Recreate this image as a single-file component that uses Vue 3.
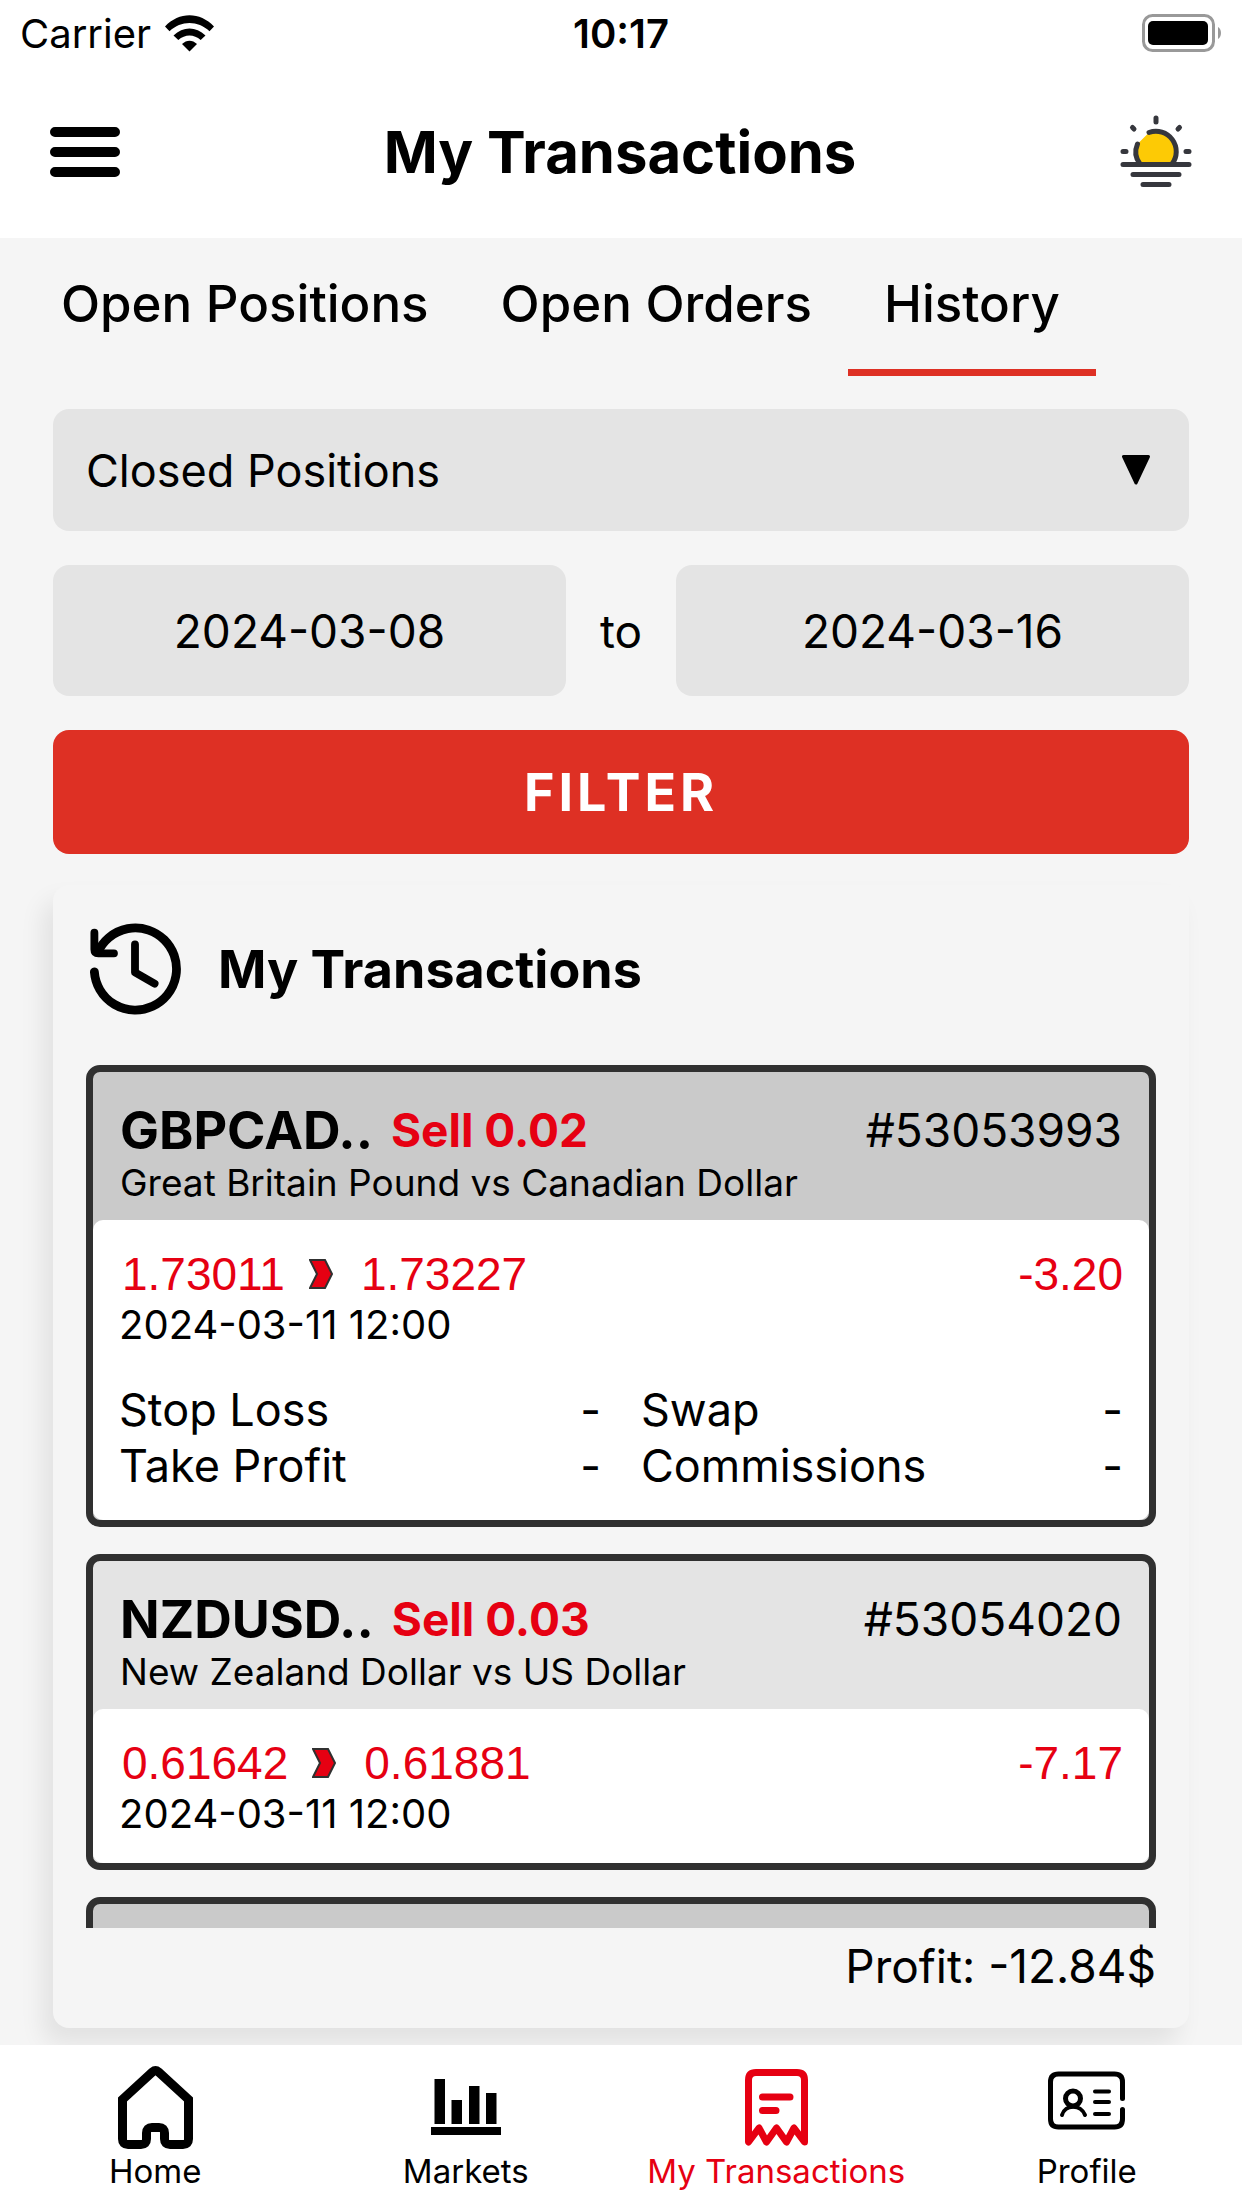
<template>
  <div class="screen">
    <div class="statusBar">
      <div class="carrier">
        <span>Carrier</span>
        <svg class="wifi" viewBox="0 0 49 37" aria-hidden="true">
          <path d="M0 11.5C14-3.5 35-3.5 49 11.5l-4.5 4.8c-11.500-11-28.500-11-40 0z" />
          <path d="M8.500 20.500c9.500-9.500 22.500-9.500 32 0l-4.800 4.500c-6.700-6-15.700-6-22.400 0z" />
          <path d="M17 29c4.500-4.500 10.500-4.500 15 0l-7.500 7.500z" />
        </svg>
      </div>
      <span class="clock">10:17</span>
      <svg class="battery" viewBox="0 0 80 38" aria-hidden="true">
        <rect x="1.500" y="1.500" width="70" height="35" rx="9" fill="none" stroke="#999" stroke-width="3" />
        <rect x="6" y="7" width="60" height="24" rx="5" />
        <path d="M76 13c4 2 4 10 0 12z" fill="#999" />
      </svg>
    </div>

    <header class="header">
      <button class="iconButton" aria-label="Menu">
        <svg class="menuIcon" viewBox="0 0 70 50">
          <path d="M5 5h60M5 25h60M5 45h60" />
        </svg>
      </button>
      <h1>My Transactions</h1>
      <button class="iconButton" aria-label="Theme">
        <svg class="sunIcon" viewBox="0 0 72 74">
          <path d="M17.500 29L29 17.500A20 20 0 0 1 52 49H20A20 20 0 0 1 17.500 29z" fill="#fdca05" />
          <g fill="none" stroke="#36373d" stroke-width="5" stroke-linecap="round">
            <path d="M29 17.500A20.300 20.300 0 0 1 52 49M17.500 29A20 20 0 0 0 20 49" />
            <path d="M36 3v4M3 36.500h3M66 36.500h3M12.500 12.500l1.500 1.500M59.500 12.500L58 14" />
            <path d="M3 49.500h66M13 59.500h46M23 69.500h26" />
          </g>
        </svg>
      </button>
    </header>

    <main class="content">
      <nav class="tabs">
        <button
          v-for="tab in tabs"
          :key="tab"
          :class="{ active: tab === activeTab }"
          @click="activeTab = tab"
        >
          {{ tab }}
        </button>
      </nav>

      <form class="filters" @submit.prevent>
        <div class="selectBox">
          <select v-model="type" aria-label="Position type">
            <option>Closed Positions</option>
          </select>
          <svg class="caret" viewBox="0 0 28 30" aria-hidden="true">
            <path d="M1.500 1.500h25L14 28z" />
          </svg>
        </div>
        <div class="dates">
          <input v-model="from" type="text" aria-label="From date" />
          <span>to</span>
          <input v-model="until" type="text" aria-label="To date" />
        </div>
        <button class="filterButton" type="submit">FILTER</button>
      </form>

      <section class="panel">
        <div class="panelTitle">
          <svg class="historyIcon" viewBox="0 0 94 94" aria-hidden="true">
            <path d="M5.500 50A42 42 0 1 0 9 30" stroke-width="9" />
            <path d="M5.500 10v17q0 4 4 4h16" stroke-width="8" />
            <path d="M47 22v28.500l20 11.500" stroke-width="8" />
          </svg>
          <h2>My Transactions</h2>
        </div>

        <div class="list">
          <article
            v-for="(trade, index) in trades"
            :key="trade.id"
            class="trade"
            :class="{ dark: index % 2 === 0 }"
          >
            <div class="tradeHead">
              <div class="tradeTop">
                <strong class="symbol">{{ trade.symbol }}</strong>
                <strong class="side">{{ trade.side }}</strong>
                <span class="tradeId">{{ trade.id }}</span>
              </div>
              <div class="description">{{ trade.description }}</div>
            </div>
            <div class="tradeBody">
              <div class="prices">
                <span>{{ trade.open }}</span>
                <svg class="chevron" viewBox="0 0 24 30" aria-hidden="true">
                  <path d="M1 1h15l7 14-7 14H1l7-14z" />
                </svg>
                <span>{{ trade.close }}</span>
                <span class="result">{{ trade.profit }}</span>
              </div>
              <div class="date">{{ trade.date }}</div>
              <dl v-if="index === expanded" class="details">
                <div v-for="label in details" :key="label">
                  <dt>{{ label }}</dt>
                  <dd>-</dd>
                </div>
              </dl>
            </div>
          </article>
        </div>

        <div class="total">Profit: -12.84$</div>
      </section>
    </main>

    <nav class="bottomNav">
      <a href="#home">
        <svg class="homeIcon" viewBox="0 0 75 83" aria-hidden="true">
          <path
            d="M10 78.500h13q5.500 0 5.500-5.500v-6q0-5.500 5.500-5.500h7q5.500 0 5.500 5.500v6q0 5.500 5.500 5.500h13q5.500 0 5.500-5.500V33.500L40.500 6q-3-2.500-6 0L4.500 33.500V73q0 5.500 5.500 5.500z"
          />
        </svg>
        <span>Home</span>
      </a>
      <a href="#markets">
        <svg class="marketsIcon" viewBox="0 0 70 56" aria-hidden="true">
          <path d="M3.500 0h10.500v45H3.500zM20.500 21H31v24H20.500zM38 7h10.500v38H38zM55 14h10.500v31H55zM0 48h70v8H0z" />
        </svg>
        <span>Markets</span>
      </a>
      <a href="#transactions" class="current">
        <svg class="receiptIcon" viewBox="0 0 63 77" aria-hidden="true">
          <path
            d="M3.500 73V11q0-7.500 7.500-7.500h41q7.500 0 7.500 7.500v62L49 59l-7.500 14-10-14-10 14L14 59z"
          />
          <path d="M17.500 28H45M17.500 41.500H31" />
        </svg>
        <span>My Transactions</span>
      </a>
      <a href="#profile">
        <svg class="profileIcon" viewBox="0 0 77 72" aria-hidden="true">
          <path d="M74.500 27.500V11q0-8-8-8h-56q-8 0-8 8v37q0 8 8 8h56q8 0 8-8V38.500" />
          <circle cx="25" cy="27.500" r="7.500" />
          <path d="M14 44c3-11 19-11 23 0M47 20.500h14M47 31h14M47 43h14" stroke-width="4" />
        </svg>
        <span>Profile</span>
      </a>
    </nav>
  </div>
</template>

<script setup>
import { ref } from "vue";

const tabs = ["Open Positions", "Open Orders", "History"];
const activeTab = ref("History");

const type = ref("Closed Positions");
const from = ref("2024-03-08");
const until = ref("2024-03-16");

const expanded = ref(0);
const details = ["Stop Loss", "Swap", "Take Profit", "Commissions"];

const trades = [
  {
    id: "#53053993",
    symbol: "GBPCAD..",
    side: "Sell 0.02",
    description: "Great Britain Pound vs Canadian Dollar",
    open: "1.73011",
    close: "1.73227",
    profit: "-3.20",
    date: "2024-03-11 12:00",
  },
  {
    id: "#53054020",
    symbol: "NZDUSD..",
    side: "Sell 0.03",
    description: "New Zealand Dollar vs US Dollar",
    open: "0.61642",
    close: "0.61881",
    profit: "-7.17",
    date: "2024-03-11 12:00",
  },
  { id: "" },
];
</script>

<style>
body {
  background-color: #f5f5f5;
}
</style>

<style scoped>
* {
  box-sizing: border-box;
}

.screen {
  height: 100vh;
  display: flex;
  flex-direction: column;
  background-color: #f5f5f5;
  color: #000;
  font-family: Inter, "Liberation Sans", sans-serif;
  font-size: 46px;
}

button,
input,
select {
  font: inherit;
  color: inherit;
  border: none;
  background: none;
  margin: 0;
  padding: 0;
}

h1,
h2,
dl,
dd {
  margin: 0;
}

svg {
  display: block;
  flex: none;
}

.statusBar {
  display: grid;
  grid-template-columns: 1fr auto 1fr;
  align-items: center;
  height: 66px;
  padding: 0 20px;
  background-color: #fff;
  font-size: 40px;
}

.carrier {
  display: flex;
  align-items: center;
  gap: 14px;
}

.wifi {
  width: 49px;
  height: 37px;
}

.clock {
  font-weight: 600;
}

.battery {
  width: 80px;
  height: 38px;
  justify-self: end;
}

.header {
  display: flex;
  align-items: center;
  justify-content: space-between;
  height: 172px;
  padding: 0 50px;
  background-color: #fff;
}

.header h1 {
  font-size: 58px;
  font-weight: 700;
}

.menuIcon {
  width: 70px;
  height: 50px;
  stroke: #000;
  stroke-width: 10px;
  stroke-linecap: round;
}

.sunIcon {
  width: 72px;
  height: 74px;
}

.content {
  flex: 1;
  min-height: 0;
  display: flex;
  flex-direction: column;
  padding-bottom: 17px;
  overflow: hidden;
}

.tabs {
  display: flex;
  padding: 0 25px;
}

.tabs button {
  height: 138px;
  padding: 0 36px;
  border-bottom: 7px solid transparent;
  font-size: 51px;
  font-weight: 500;
  white-space: nowrap;
}

.tabs .active {
  border-color: #de3024;
}

.filters {
  display: flex;
  flex-direction: column;
  gap: 34px;
  padding: 33px 53px 31px;
}

.selectBox {
  display: grid;
  align-items: center;
}

.selectBox select {
  grid-area: 1 / 1;
  appearance: none;
  width: 100%;
  height: 122px;
  padding: 0 33px;
  border-radius: 16px;
  background-color: #e4e4e4;
  font-size: 45px;
}

.caret {
  grid-area: 1 / 1;
  justify-self: end;
  width: 28px;
  height: 36px;
  margin-right: 39px;
  stroke: #000;
  stroke-width: 3px;
  stroke-linejoin: round;
  pointer-events: none;
}

.dates {
  display: flex;
  align-items: center;
}

.dates input {
  flex: 1;
  min-width: 0;
  height: 131px;
  border-radius: 16px;
  background-color: #e4e4e4;
  text-align: center;
}

.dates span {
  width: 110px;
  text-align: center;
}

.filterButton {
  height: 124px;
  border-radius: 16px;
  background-color: #de3024;
  color: #fff;
  font-size: 52px;
  font-weight: 700;
  letter-spacing: 4px;
}

.panel {
  flex: 1;
  min-height: 0;
  display: flex;
  flex-direction: column;
  margin: 0 53px;
  padding: 34px 33px;
  border-radius: 16px;
  background-color: #f5f5f5;
  box-shadow: -10px 16px 24px rgba(0, 0, 0, 0.08);
}

.panelTitle {
  display: flex;
  align-items: center;
  gap: 37px;
  padding: 4px 3px 50px;
}

.panelTitle h2 {
  font-size: 52px;
  font-weight: 700;
}

.historyIcon {
  width: 92px;
  height: 92px;
  fill: none;
  stroke: #000;
  stroke-linecap: round;
  stroke-linejoin: round;
}

.list {
  flex: 1;
  min-height: 0;
  display: flex;
  flex-direction: column;
  gap: 27px;
  overflow: hidden;
}

.trade {
  flex: none;
  border: 7px solid #303030;
  border-radius: 14px;
  background-color: #e4e4e4;
}

.dark {
  background-color: #cacaca;
}

.tradeHead {
  padding: 27px 27px 15px;
}

.tradeTop {
  display: flex;
  align-items: center;
  gap: 18px;
  height: 62px;
}

.symbol {
  font-size: 52px;
  font-weight: 700;
}

.side {
  font-weight: 700;
  color: #e60012;
}

.tradeId {
  margin-left: auto;
}

.description {
  font-size: 37px;
  line-height: 44px;
}

.tradeBody {
  padding: 28px 26px 24px;
  border-radius: 10px;
  background-color: #fff;
}

.prices {
  display: flex;
  align-items: center;
  gap: 24px;
  padding-left: 3px;
  color: #e60012;
  font-family: "Liberation Sans", Arial, sans-serif;
  line-height: 52px;
}

.chevron {
  width: 24px;
  height: 30px;
  margin-right: 4px;
  fill: #e60012;
  stroke: #303030;
  stroke-width: 2px;
}

.result {
  margin-left: auto;
}

.date {
  font-size: 40px;
  line-height: 50px;
}

.details {
  display: grid;
  grid-template-columns: 1fr 1fr;
  column-gap: 40px;
  padding: 32px 0 2px;
  font-size: 45px;
  line-height: 56px;
}

.details div {
  display: flex;
  justify-content: space-between;
}

.total {
  padding-top: 10px;
  line-height: 56px;
  text-align: right;
}

.bottomNav {
  display: grid;
  grid-template-columns: repeat(4, 1fr);
  height: 163px;
  background-color: #fff;
}

.bottomNav a {
  display: grid;
  grid-template-rows: 84px 44px;
  align-items: center;
  justify-items: center;
  align-content: start;
  padding-top: 20px;
  color: #000;
  font-size: 33px;
  line-height: 46px;
  text-decoration: none;
  white-space: nowrap;
}

.bottomNav .current {
  color: #e60012;
}

.homeIcon {
  width: 75px;
  height: 83px;
  fill: none;
  stroke: currentColor;
  stroke-width: 9px;
}

.marketsIcon {
  width: 70px;
  height: 56px;
}

.receiptIcon {
  width: 63px;
  height: 77px;
  fill: none;
  stroke: currentColor;
  stroke-width: 7px;
  stroke-linecap: round;
  stroke-linejoin: round;
}

.profileIcon {
  width: 77px;
  height: 72px;
  fill: none;
  stroke: currentColor;
  stroke-width: 5px;
  stroke-linecap: round;
}
</style>
